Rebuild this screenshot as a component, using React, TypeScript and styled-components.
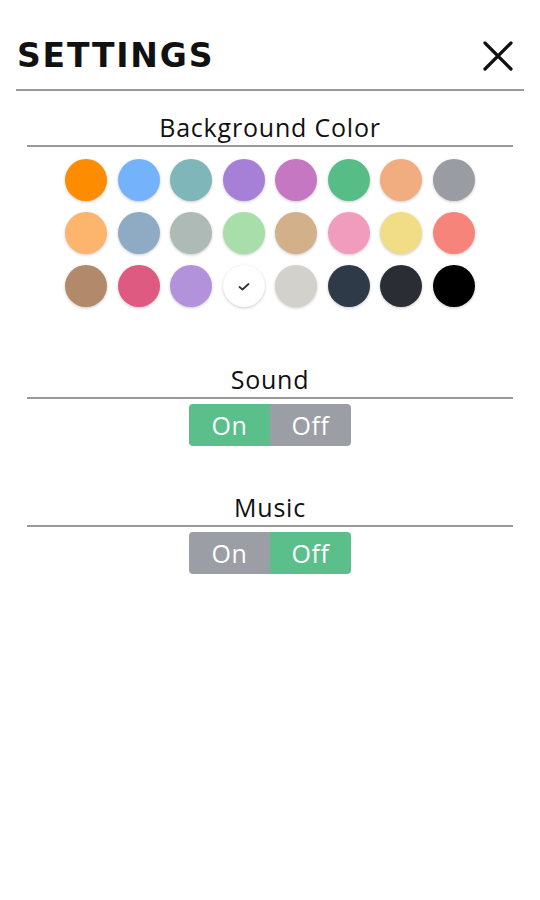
import styled, { createGlobalStyle } from "styled-components";

const Global = createGlobalStyle`
  html, body {
    margin: 0;
    padding: 0;
    background: #fff;
    font-family: "Open Sans", "Noto Sans", sans-serif;
    color: #111;
  }
`;

const Page = styled.div`
  width: 540px;
  min-height: 900px;
  box-sizing: border-box;
  padding: 22px 16px 0;
`;

const Header = styled.div`
  display: flex;
  align-items: center;
  justify-content: space-between;
  padding: 0 10px 0 1px;
  height: 67px;
  border-bottom: 2px solid #9a9a9a;
  margin-bottom: 20px;
`;

const Title = styled.h1`
  margin: 0;
  font-family: "DejaVu Sans", "Open Sans", sans-serif;
  font-size: 33px;
  font-weight: 700;
  letter-spacing: 1.8px;
  color: #111;
`;

const Close = styled.button`
  border: 0;
  background: none;
  padding: 0;
  width: 32px;
  height: 32px;
  display: flex;
  align-items: center;
  justify-content: center;
  cursor: pointer;
`;

const Section = styled.section<{ $gap: number }>`
  display: flex;
  flex-direction: column;
  align-items: center;
  margin-bottom: ${(p) => p.$gap}px;
`;

const Label = styled.div`
  width: 486px;
  text-align: center;
  font-size: 25px;
  letter-spacing: 0.8px;
  line-height: 32px;
  padding-bottom: 2px;
  border-bottom: 2px solid #9a9a9a;
`;

const Swatches = styled.div`
  display: grid;
  grid-template-columns: repeat(8, 42px);
  column-gap: 10.5px;
  row-gap: 11px;
  margin-top: 12px;
`;

const Swatch = styled.button<{ $color: string }>`
  width: 42px;
  height: 42px;
  padding: 0;
  border: 0;
  border-radius: 50%;
  background: ${(p) => p.$color};
  box-shadow: 0 1px 3px rgba(0, 0, 0, 0.22);
  display: flex;
  align-items: center;
  justify-content: center;
  cursor: pointer;
`;

const Toggle = styled.div`
  display: flex;
  margin-top: 5px;
  border-radius: 4px;
  overflow: hidden;
`;

const ToggleOption = styled.button<{ $active: boolean }>`
  width: 81px;
  height: 42px;
  border: 0;
  padding: 0;
  font-family: inherit;
  font-size: 25px;
  letter-spacing: 0.5px;
  color: #fff;
  background: ${(p) => (p.$active ? "#5abf8b" : "#9c9ea5")};
  cursor: pointer;
`;

const colors = [
  "#fe8c00", "#74b3fc", "#7fb6b9", "#a67fd7", "#c577c2", "#57bd87", "#f1ad80", "#9a9ca3",
  "#fdb46c", "#8faac3", "#aebab6", "#a8dea9", "#d1b08a", "#f19cbd", "#f1dd86", "#f7847a",
  "#b28a6b", "#de5a80", "#b292db", "#ffffff", "#d2d1cc", "#2f3a48", "#2a2d34", "#000000",
];

function Check() {
  return (
    <svg width="16" height="16" viewBox="0 0 16 16" fill="none">
      <path d="M3.5 9 L6.5 11.5 L12.5 6" stroke="#333" strokeWidth="1.8" strokeLinecap="round" strokeLinejoin="round" />
    </svg>
  );
}

function OnOff({ on }: { on: boolean }) {
  return (
    <Toggle>
      <ToggleOption $active={on}>On</ToggleOption>
      <ToggleOption $active={!on}>Off</ToggleOption>
    </Toggle>
  );
}

export default function App() {
  return (
    <>
      <Global />
      <Page>
        <Header>
          <Title>SETTINGS</Title>
          <Close aria-label="Close">
            <svg width="30" height="30" viewBox="0 0 30 30">
              <path d="M2 2 L28 28 M28 2 L2 28" stroke="#111" strokeWidth="3.2" strokeLinecap="round" />
            </svg>
          </Close>
        </Header>

        <Section $gap={56}>
          <Label>Background Color</Label>
          <Swatches>
            {colors.map((c, i) => (
              <Swatch key={i} $color={c}>
                {i === 19 && <Check />}
              </Swatch>
            ))}
          </Swatches>
        </Section>

        <Section $gap={45}>
          <Label>Sound</Label>
          <OnOff on />
        </Section>

        <Section $gap={0}>
          <Label>Music</Label>
          <OnOff on={false} />
        </Section>
      </Page>
    </>
  );
}
